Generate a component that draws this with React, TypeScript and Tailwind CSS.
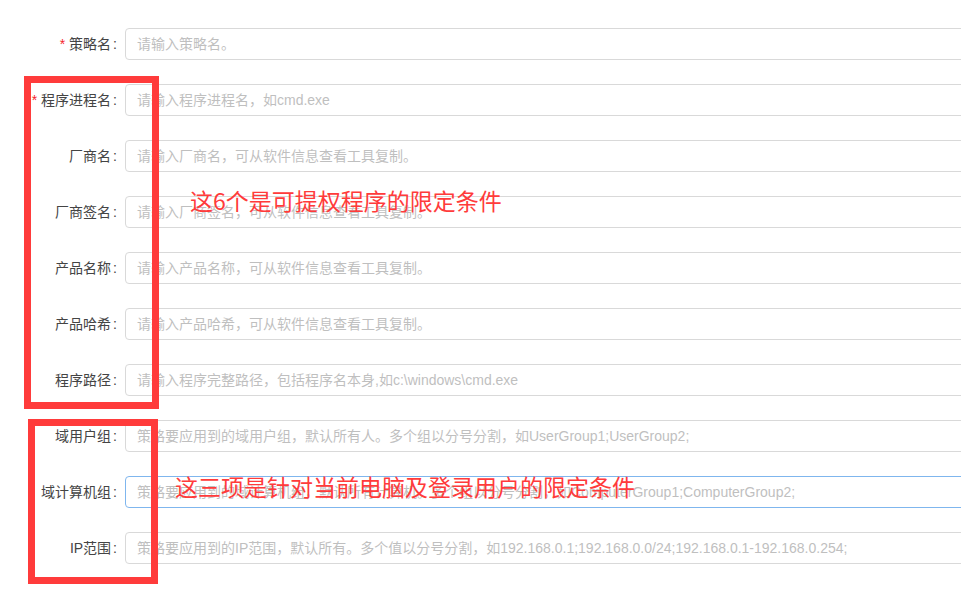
import React from 'react';

type Field = {
  label: string;
  required?: boolean;
  placeholder: string;
  focused?: boolean;
};

const fields: Field[] = [
  { label: '策略名', required: true, placeholder: '请输入策略名。' },
  { label: '程序进程名', required: true, placeholder: '请输入程序进程名，如cmd.exe' },
  { label: '厂商名', placeholder: '请输入厂商名，可从软件信息查看工具复制。' },
  { label: '厂商签名', placeholder: '请输入厂商签名，可从软件信息查看工具复制。' },
  { label: '产品名称', placeholder: '请输入产品名称，可从软件信息查看工具复制。' },
  { label: '产品哈希', placeholder: '请输入产品哈希，可从软件信息查看工具复制。' },
  { label: '程序路径', placeholder: '请输入程序完整路径，包括程序名本身,如c:\\windows\\cmd.exe' },
  { label: '域用户组', placeholder: '策略要应用到的域用户组，默认所有人。多个组以分号分割，如UserGroup1;UserGroup2;' },
  {
    label: '域计算机组',
    placeholder: '策略要应用到的域计算机组，默认所有计算机。多个组以分号分割，如ComputerGroup1;ComputerGroup2;',
    focused: true,
  },
  { label: 'IP范围', placeholder: '策略要应用到的IP范围，默认所有。多个值以分号分割，如192.168.0.1;192.168.0.0/24;192.168.0.1-192.168.0.254;' },
];

const FONT = "font-['Liberation_Sans','Noto_Sans_CJK_SC',sans-serif]";

const App: React.FC = () => {
  return (
    <div className={`relative w-[961px] h-[606px] overflow-hidden bg-white ${FONT}`}>
      {/* Form */}
      <div className="flex flex-col gap-6 pt-7">
        {fields.map((f) => (
          <div key={f.label} className="flex items-center h-8">
            <label className="w-[125px] shrink-0 pr-[6px] text-right text-[14px] text-[#444]">
              {f.required && <span className="text-[#f5222d] mr-1">*</span>}
              {f.label}
              <span className="ml-[2px] mr-[2px]">:</span>
            </label>
            <input
              type="text"
              placeholder={f.placeholder}
              className={`h-8 w-[860px] shrink-0 rounded-[4px] border bg-white px-[11px] text-[14px] outline-none placeholder:text-[#bfbfbf] ${
                f.focused ? 'border-[#7fb6ee]' : 'border-[#d9d9d9]'
              }`}
            />
          </div>
        ))}
      </div>

      {/* Annotation boxes drawn over the form */}
      <div className="absolute left-[24px] top-[76px] w-[135px] h-[333px] border-[7px] border-[#ff3b3b]" />
      <div className="absolute left-[28px] top-[419px] w-[130px] h-[165px] border-[7px] border-[#ff3b3b]" />

      {/* Annotation texts */}
      <div className="absolute left-[190px] top-[186px] text-[23px] leading-[28px] text-[#ff3b3b] whitespace-nowrap font-['Noto_Sans_CJK_SC',sans-serif]">
        这6个是可提权程序的限定条件
      </div>
      <div className="absolute left-[175px] top-[472px] text-[23px] leading-[28px] text-[#ff3b3b] whitespace-nowrap font-['Noto_Sans_CJK_SC',sans-serif]">
        这三项是针对当前电脑及登录用户的限定条件
      </div>
    </div>
  );
};

export default App;
